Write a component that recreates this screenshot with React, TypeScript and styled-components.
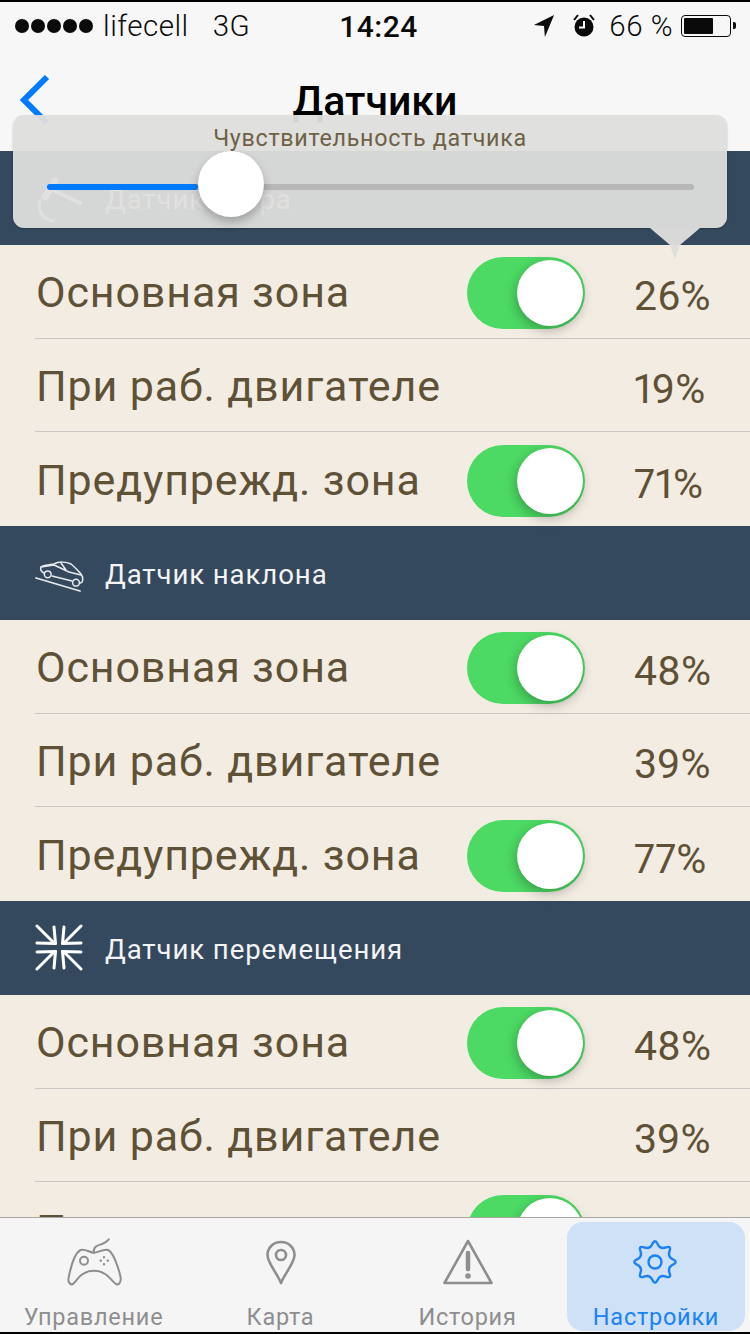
import React from 'react';
import styled, { createGlobalStyle } from 'styled-components';

const GlobalStyle = createGlobalStyle`
  html, body {
    margin: 0;
    padding: 0;
    background: #000;
  }
  * {
    box-sizing: border-box;
  }
`;

const Phone = styled.div`
  position: relative;
  width: 750px;
  height: 1334px;
  overflow: hidden;
  background: #f3ece3;
  font-family: 'Roboto', 'Liberation Sans', sans-serif;
  border-top: 2px solid #000;
`;

const Header = styled.header`
  height: 149px;
  background: #f7f7f7;
  display: flex;
  flex-direction: column;
`;

const StatusBar = styled.div`
  height: 48px;
  padding: 0 14px 0 15px;
  display: grid;
  grid-template-columns: 1fr auto 1fr;
  align-items: center;
  color: #0a0a0a;
  font-size: 29.5px;
  font-weight: 300;
  letter-spacing: 0.5px;
`;

const StatusLeft = styled.div`
  display: flex;
  align-items: center;
`;

const Signal = styled.div`
  display: flex;
  gap: 2px;
  margin-right: 10px;
`;

const Dot = styled.span`
  width: 14px;
  height: 14px;
  border-radius: 50%;
  background: #0a0a0a;
`;

const Network = styled.span`
  margin-left: 24px;
`;

const Clock = styled.div`
  margin-left: 6px;
  font-weight: 500;
  font-size: 30px;
  letter-spacing: 0.5px;
`;

const StatusRight = styled.div`
  display: flex;
  align-items: center;
  justify-content: flex-end;
  gap: 13px;
`;

const Battery = styled.div`
  position: relative;
  width: 50px;
  height: 22px;
  border: 1.5px solid #0a0a0a;
  border-radius: 4px;
  padding: 2px;
  margin-right: 5px;
  margin-left: -5px;

  &::before {
    content: '';
    display: block;
    width: 66%;
    height: 100%;
    background: #0a0a0a;
    border-radius: 1px;
  }

  &::after {
    content: '';
    position: absolute;
    right: -6px;
    top: 6px;
    width: 3px;
    height: 7px;
    background: #0a0a0a;
    border-radius: 0 2px 2px 0;
  }
`;

const LocationGlyph = styled.svg`
  margin-right: 4px;
`;

const NavBar = styled.div`
  position: relative;
  flex: 1;
  display: flex;
  justify-content: center;
  padding-top: 28px;
`;

const BackIcon = styled.svg`
  position: absolute;
  left: 18px;
  top: 24px;
  width: 34px;
  height: 52px;
`;

const Title = styled.h1`
  margin: 0;
  font-size: 41px;
  line-height: 46px;
  font-weight: 500;
  color: #000;
`;

const SectionBar = styled.div`
  height: 93.75px;
  background: #34495e;
  display: flex;
  align-items: center;
  padding-left: 35px;
  gap: 20px;
  color: #f4f4f4;
  font-size: 27.6px;
  letter-spacing: 0.9px;
`;

const SectionName = styled.span`
  padding-top: 3px;
`;

const SectionIcon = styled.svg`
  width: 50px;
  height: 50px;
  flex: none;
`;

const Row = styled.div`
  height: 93.75px;
  margin-left: 35px;
  display: grid;
  grid-template-columns: 432px 118px 1fr;
  align-items: center;
  border-bottom: 1px solid #c9c7c4;
  color: #5f5136;

  &:last-child {
    border-bottom: none;
  }
`;

const RowLabel = styled.div`
  padding-left: 1px;
  padding-top: 2px;
  font-size: 43px;
  letter-spacing: 0.85px;
  white-space: nowrap;
`;

const RowValue = styled.div`
  padding-left: 49px;
  padding-top: 9px;
  font-size: 41px;
  font-variant-numeric: proportional-nums;
  white-space: nowrap;
`;

const Toggle = styled.div`
  position: relative;
  width: 118px;
  height: 72px;
  margin-top: 4px;
  border-radius: 36px;
  background: #4cd964;
`;

const ToggleKnob = styled.div`
  position: absolute;
  right: 2px;
  top: 3px;
  width: 66px;
  height: 66px;
  border-radius: 50%;
  background: #fff;
  box-shadow: -1px 4px 12px rgba(0, 0, 0, 0.28);
`;

const Popup = styled.div`
  position: absolute;
  left: 13px;
  top: 113px;
  width: 714px;
  height: 113px;
  border-radius: 11px;
  background: rgba(222, 222, 220, 0.95);
  box-shadow: 0 1px 2px rgba(0, 0, 0, 0.25);

  &::after {
    content: '';
    position: absolute;
    left: 637px;
    bottom: -31px;
    width: 50px;
    height: 31px;
    background: rgba(222, 222, 220, 0.96);
    clip-path: polygon(0 0, 100% 0, 60% 55%, 50% 100%, 40% 55%);
  }
`;

const PopupTitle = styled.div`
  padding-top: 9px;
  text-align: center;
  font-size: 23.3px;
  line-height: 28px;
  letter-spacing: 0.7px;
  color: #6f6046;
`;

const SliderTrack = styled.div`
  position: absolute;
  left: 34px;
  right: 33px;
  top: 69px;
  height: 6px;
  border-radius: 3px;
  background: #b7b7b7;
`;

const SliderFill = styled.div`
  height: 100%;
  border-radius: 3px;
  background: #007aff;
`;

const SliderKnob = styled.div`
  position: absolute;
  top: -33px;
  width: 66px;
  height: 66px;
  border-radius: 50%;
  background: #fff;
  box-shadow: 0 5px 10px rgba(0, 0, 0, 0.25);
`;

const TabBar = styled.nav`
  position: absolute;
  left: 0;
  right: 0;
  bottom: 0;
  height: 117px;
  display: grid;
  grid-template-columns: 187px 187px 187px 1fr;
  background: #f5f5f6;
  border-top: 1px solid #a9a7a4;
  border-bottom: 2px solid #000;
`;

const Tab = styled.div<{ $active?: boolean }>`
  display: flex;
  flex-direction: column;
  align-items: center;
  margin: ${({ $active }) => ($active ? '4px 5px 4px 6px' : '0')};
  padding-top: ${({ $active }) => ($active ? '11px' : '15px')};
  border-radius: 16px;
  background: ${({ $active }) => ($active ? '#cfe1f6' : 'transparent')};
  color: ${({ $active }) => ($active ? '#1a82f7' : '#8e8e8e')};
  font-size: 23.5px;
  letter-spacing: 0.75px;
`;

const TabIcon = styled.svg`
  width: 64px;
  height: 64px;
  margin-bottom: 6px;
  flex: none;
  fill: none;
  stroke: currentColor;
  stroke-width: 2;
  stroke-linejoin: round;
  stroke-linecap: round;
`;

type RowData = { label: string; value: string; toggle: boolean };

// wavy outline of the settings gear: control points alternate outer / inner radius
const buildGearPath = (cx: number, cy: number, outer: number, inner: number, teeth: number) => {
  const pts: [number, number][] = [];
  for (let i = 0; i < teeth * 2; i++) {
    const r = i % 2 === 0 ? outer : inner;
    const a = (i * Math.PI) / teeth - Math.PI / 2;
    pts.push([cx + r * Math.cos(a), cy + r * Math.sin(a)]);
  }
  const mid = (a: [number, number], b: [number, number]) =>
    `${((a[0] + b[0]) / 2).toFixed(2)} ${((a[1] + b[1]) / 2).toFixed(2)}`;
  let d = `M${mid(pts[pts.length - 1], pts[0])}`;
  pts.forEach((p, i) => {
    const next = pts[(i + 1) % pts.length];
    d += ` Q${p[0].toFixed(2)} ${p[1].toFixed(2)} ${mid(p, next)}`;
  });
  return `${d} Z`;
};

const ShockIcon = () => (
  <SectionIcon viewBox="0 0 50 50" fill="none" stroke="#fff" strokeLinecap="round">
    <path d="M18 17 L45 30" strokeWidth="4" />
    <path d="M20 8 L10 24" strokeWidth="7" />
    <path d="M5 28 C2 38 8 46 18 48" strokeWidth="3" />
  </SectionIcon>
);

const TiltIcon = () => (
  <SectionIcon viewBox="0 0 50 50" fill="none" stroke="#e8ebee" strokeWidth="1.5" strokeLinecap="round" strokeLinejoin="round">
    <path d="M1 30 L45 43" strokeWidth="1.8" />
    <path d="M9 25 C6 24 5 21 6 19 C8 17 14 17 19 16 C24 13 32 14 36 16 C40 19 43 23 46 26 C49 30 48 35 45 35 M37 33 L17 28" />
    <path d="M6 19 L19 17 L34 24 L46 27 M26 15 L31 22" />
    <circle cx="12.7" cy="26.3" r="3.4" />
    <circle cx="41" cy="34.7" r="3.4" />
  </SectionIcon>
);

const MoveIcon = () => (
  <SectionIcon viewBox="0 0 50 50" fill="none" stroke="#fff" strokeWidth="3" strokeLinecap="round">
    <path d="M2 3 L19 20 M46 3 L29 20 M2 46 L19 29 M46 46 L29 29" />
    <path d="M19 4 L20.5 20.5 M29 4 L27.5 20.5 M19 45 L20.5 28.5 M29 45 L27.5 28.5" />
    <path d="M2 20 L20.5 20.5 M2 29 L20.5 28.5 M46 20 L27.5 20.5 M46 29 L27.5 28.5" />
  </SectionIcon>
);

const sections = [
  {
    name: 'Датчик удара',
    icon: <ShockIcon />,
    rows: [
      { label: 'Основная зона', value: '26%', toggle: true },
      { label: 'При раб. двигателе', value: '19%', toggle: false },
      { label: 'Предупрежд. зона', value: '71%', toggle: true },
    ] as RowData[],
  },
  {
    name: 'Датчик наклона',
    icon: <TiltIcon />,
    rows: [
      { label: 'Основная зона', value: '48%', toggle: true },
      { label: 'При раб. двигателе', value: '39%', toggle: false },
      { label: 'Предупрежд. зона', value: '77%', toggle: true },
    ] as RowData[],
  },
  {
    name: 'Датчик перемещения',
    icon: <MoveIcon />,
    rows: [
      { label: 'Основная зона', value: '48%', toggle: true },
      { label: 'При раб. двигателе', value: '39%', toggle: false },
      { label: 'Предупрежд. зона', value: '77%', toggle: true },
    ] as RowData[],
  },
];

const App: React.FC = () => {
  const sliderLeft = 23.4;

  return (
    <>
      <GlobalStyle />
      <Phone>
        <Header>
          <StatusBar>
            <StatusLeft>
              <Signal>
                {[0, 1, 2, 3, 4].map((i) => (
                  <Dot key={i} />
                ))}
              </Signal>
              lifecell
              <Network>3G</Network>
            </StatusLeft>
            <Clock>14:24</Clock>
            <StatusRight>
              <LocationGlyph width="22" height="28" viewBox="0 0 24 28">
                <path d="M23 2 L1 13 L12 14 L13 26 Z" fill="#0a0a0a" />
              </LocationGlyph>
              <svg width="24" height="28" viewBox="0 0 24 28">
                <circle cx="12" cy="15" r="9.5" fill="#0a0a0a" />
                <path d="M12 9 V15.5 H7" stroke="#f7f7f7" strokeWidth="2" fill="none" />
                <path d="M2 8 L6 3 M22 8 L18 3" stroke="#0a0a0a" strokeWidth="2" />
              </svg>
              <span>66 %</span>
              <Battery />
            </StatusRight>
          </StatusBar>
          <NavBar>
            <BackIcon viewBox="0 0 34 52" fill="none" stroke="#007aff" strokeWidth="6">
              <path d="M29 3 L6 26 L29 49" />
            </BackIcon>
            <Title>Датчики</Title>
          </NavBar>
        </Header>

        {sections.map((section) => (
          <section key={section.name}>
            <SectionBar>
              {section.icon}
              <SectionName>{section.name}</SectionName>
            </SectionBar>
            {section.rows.map((row) => (
              <Row key={row.label}>
                <RowLabel>{row.label}</RowLabel>
                {row.toggle ? (
                  <Toggle>
                    <ToggleKnob />
                  </Toggle>
                ) : (
                  <div />
                )}
                <RowValue>{row.value}</RowValue>
              </Row>
            ))}
          </section>
        ))}

        <Popup>
          <PopupTitle>Чувствительность датчика</PopupTitle>
          <SliderTrack>
            <SliderFill style={{ width: `${sliderLeft}%` }} />
            <SliderKnob style={{ left: `${sliderLeft}%` }} />
          </SliderTrack>
        </Popup>

        <TabBar>
          <Tab>
            <TabIcon viewBox="0 0 64 64">
              <path d="M31.8 19.7 C31 13 36 12.5 40 11 C43 10 45 8.5 46.8 6.3" />
              <path d="M18.5 17 C23 15.5 28 19.7 32 19.7 C36 19.7 41 15.5 46 17 C51 19 56 33 58.5 43.7 C59.5 49 57 52.5 54 51 C50 48.5 47 42.5 42 40.3 C36 37 28 37 22 40.3 C17 42.5 14 48.5 11 51 C8 52.5 5.5 49 6.8 43.7 C9 33 13 20 18.5 17 Z" />
              <circle cx="22" cy="27.7" r="4" />
              <path d="M42 24 V24.5 M42 31 V31.5 M38.5 27.7 H39 M45.5 27.7 H46" strokeWidth="2.2" />
            </TabIcon>
            Управление
          </Tab>
          <Tab>
            <TabIcon viewBox="0 0 64 64">
              <path d="M32 50 C28 40 18.5 30 18.5 22 C18.5 14.5 24.5 9 32 9 C39.5 9 45.5 14.5 45.5 22 C45.5 30 36 40 32 50 Z" strokeWidth="2.6" />
              <circle cx="32" cy="22" r="5" strokeWidth="2.6" />
            </TabIcon>
            Карта
          </Tab>
          <Tab>
            <TabIcon viewBox="0 0 64 64">
              <path d="M32 8 L55.5 50 H8.5 Z" strokeWidth="2.6" />
              <path d="M32 20 L32 36" strokeWidth="4.5" />
              <circle cx="32" cy="43" r="1.6" strokeWidth="2.4" />
            </TabIcon>
            История
          </Tab>
          <Tab $active>
            <TabIcon viewBox="0 0 64 64">
              <path d={buildGearPath(31, 29, 23.5, 13.5, 8)} strokeWidth="2.4" />
              <circle cx="31" cy="29" r="6.5" strokeWidth="2.4" />
            </TabIcon>
            Настройки
          </Tab>
        </TabBar>
      </Phone>
    </>
  );
};

export default App;
